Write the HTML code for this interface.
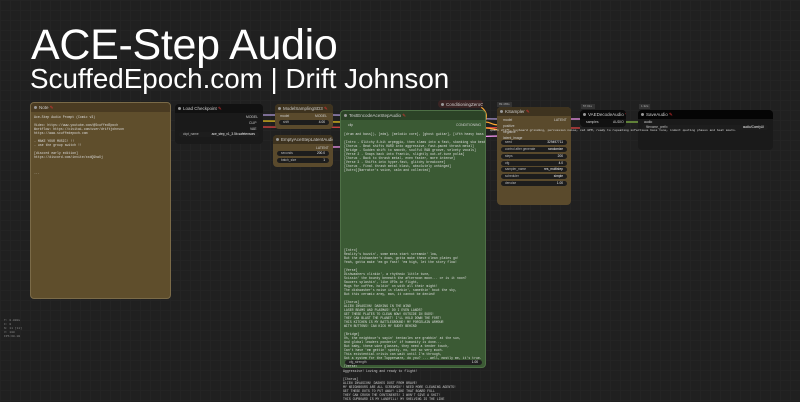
<!DOCTYPE html>
<html style="width:800px;height:402px;overflow:hidden"><head><meta charset="utf-8"><style>
*{margin:0;padding:0;box-sizing:border-box}
body{width:800px;height:402px;overflow:hidden;background:#202020;position:relative;font-family:"Liberation Sans",sans-serif;
background-image:linear-gradient(#242424 1px,transparent 1px),linear-gradient(90deg,#242424 1px,transparent 1px);background-size:10px 10px}
.n{position:absolute;border-radius:4px;overflow:hidden}
.h{height:9px;font-size:4.5px;color:#ccc;padding:2px 0 0 8px;position:relative;white-space:nowrap}
.h:before{content:"";position:absolute;left:3px;top:3px;width:3px;height:3px;border-radius:50%;background:#999}
.t{font-family:"Liberation Mono",monospace;font-size:3.2px;line-height:4px;color:#ddd;white-space:pre;padding:3px}
.w{position:absolute;height:5px;border-radius:3px;background:#1d1d1d;font-size:3.2px;color:#bbb;line-height:5px;padding:0 4px;white-space:nowrap}
.w b{float:right;font-weight:normal;color:#eee}
.lbl{position:absolute;font-size:3.4px;color:#ccc;white-space:nowrap}
</style></head><body>
<div style="position:absolute;left:31px;top:21px;font-size:43px;color:#fff;letter-spacing:-0.3px">ACE-Step Audio</div>
<div style="position:absolute;left:30px;top:63px;font-size:27.8px;color:#fff">ScuffedEpoch.com | Drift Johnson</div>

<svg style="position:absolute;left:0;top:0" width="800" height="402">
<path d="M258 115 H280" stroke="#b39ddb" stroke-width="1.2" fill="none"/>
<path d="M258 121 C300 121 310 122 345 122" stroke="#e5c01c" stroke-width="1.2" fill="none"/>
<path d="M258 127 C400 127 450 128 580 128" stroke="#e04444" stroke-width="1.2" fill="none"/>
<path d="M333 115 C400 115 440 119 500 119" stroke="#b39ddb" stroke-width="1.2" fill="none"/>
<path d="M333 147 C420 147 450 136 500 136" stroke="#ff9cf9" stroke-width="1.2" fill="none"/>
<path d="M485 122 C492 122 490 125 500 125 M485 122 C490 110 480 105 470 103 M485 128 C492 128 495 130 500 130" stroke="#ffa931" stroke-width="1.2" fill="none"/>
<path d="M570 119 H585" stroke="#ff9cf9" stroke-width="1.2" fill="none"/>
<path d="M625 122 H641" stroke="#8bc34a" stroke-width="1.2" fill="none"/>
</svg>

<div class="n" style="left:30px;top:102px;width:141px;height:197px;background:#5f4e2c;border:1px solid #7a6a48">
<div class="h" style="background:#4a3b22">Note <span style="color:#e33">✎</span></div>
<div class="t">Ace-Step Audio Prompt (Comic v3)

Video: https://www.youtube.com/@ScuffedEpoch
Workflow: https://civitai.com/user/driftjohnson
https://www.scuffedepoch.com

- MAKE YOUR MUSIC! !!
- use the group switch !!

[discord early edition]
https://discord.com/invite/xxdQ9hwXj



...</div></div>

<div class="n" style="left:175px;top:104px;width:88px;height:40px;background:#1a1a1a">
<div class="h" style="background:#111">Load Checkpoint <span style="color:#e33">✎</span></div>
<div class="lbl" style="left:71px;top:11px">MODEL</div><div class="lbl" style="left:74px;top:17px">CLIP</div><div class="lbl" style="left:75px;top:23px">VAE</div>
<div class="w" style="left:4px;top:28px;width:80px">ckpt_name<b>ace_step_v1_3.5b.safetensors</b></div></div>

<div class="n" style="left:275px;top:104px;width:58px;height:25px;background:#5a4a2c">
<div class="h" style="background:#3e331f">ModelSamplingSD3 <span style="color:#e33">✎</span></div>
<div class="lbl" style="left:5px;top:10px">model</div><div class="lbl" style="left:40px;top:10px">MODEL</div>
<div class="w" style="left:4px;top:16px;width:50px">shift<b>4.00</b></div></div>

<div class="n" style="left:273px;top:135px;width:60px;height:32px;background:#5a4a2c">
<div class="h" style="background:#3e331f">EmptyAceStepLatentAudio <span style="color:#e33">✎</span></div>
<div class="lbl" style="left:43px;top:11px">LATENT</div>
<div class="w" style="left:4px;top:16px;width:52px">seconds<b>200.0</b></div>
<div class="w" style="left:4px;top:23px;width:52px">batch_size<b>1</b></div></div>

<div class="n" style="left:438px;top:100px;width:45px;height:8px;background:#3a2424"><div class="h" style="background:#3a2424;height:8px">ConditioningZeroOut</div></div>

<div class="n" style="left:340px;top:110px;width:146px;height:258px;background:#3b5a34;border:1px solid #4e7046">
<div class="h" style="background:#2c4327">TextEncodeAceStepAudio <span style="color:#e33">✎</span></div>
<div class="lbl" style="left:7px;top:12px">clip</div><div class="lbl" style="left:115px;top:12px">CONDITIONING</div>
<div class="t" style="margin-top:9px">[drum and bass]), [edm], [melodic core], [ghost guitar], [ifth heavy bass drums]

[Intro - Glitchy 8-bit arpeggio, then slams into a fast, skanking ska beat]
[Chorus - Beat shifts HARD into aggressive, fast-paced thrash metal]
[Bridge - Sudden shift to smooth, soulful R&B groove, velvety vocals]
[Verse 2 - Snaps back into frantic, slightly out-of-tune polka]
[Chorus - Back to thrash metal, even faster, more intense]
[Verse 3 - Shifts into hyper-fast, glitchy breakcore]
[Chorus - Final thrash metal blast, absolutely unhinged]
[Outro][Narrator's voice, calm and collected]



















[Intro]
Reality's buzzin', some mess start screamin' low,
But the dishwasher's down, gotta make these clean plates go!
Yeah, gotta make 'em go fast! 'em high, let the story flow!

[Verse]
Dishwashers clinkin', a rhythmic little tune,
Scissin' the bounty beneath the afternoon moon... or is it noon?
Saucers splashin', like UFOs in flight,
Mugs for coffee, holdin' on with all their might!
The dishwasher's noise is clankin', somethin' bout the sky,
But this ceramic army, man, it cannot be denied!

[Chorus]
ALIEN INVASION! DASHING IN THE WIND
LASER BEAMS AND PLASMAS! DO I EVEN LANDS?
GET THESE PLATES TO CLEAN NOW! OUTSIDE IN SUDS!
THEY CAN BLAST THE PLANET! I'LL HOLD DOWN THE FORT!
THIS KITCHEN IS MY BATTLEGROUND! MY PORCELAIN ARMOUR
WITH BUTTONS! CAN KICK MY SUDSY BEHIND

[Bridge]
Oh, the neighbour's sayin' tentacles are grabbin' at the sun,
And global leaders ponderin' if humanity is done...
But baby, these wine glasses, they need a tender touch,
Can't have 'em gettin' spotty, no, not so very much.
This existential crisis can wait until I'm through,
Got a system for the Tupperware, do you? ... well, mostly me, it's true.

[Verse]
The bowls go here, the platters go right there!
Little green men stompin', shoutin' and their evil glare!
Heard they're callin' missiles, fryin' cities into goo,
But this scrub brush's disinfected! What's a poor woman to do?</div>
<div class="w" style="left:4px;top:249px;width:137px;background:#202020">cfg_strength<b>1.00</b></div></div>

<div class="t" style="position:absolute;left:340px;top:366px;color:#ccc;height:36px;overflow:hidden">Aggressive! Loving and ready to flight!

[Chorus]
ALIEN INVASION! DASHES DUST FROM BRAVE!
MY NEIGHBOURS ARE ALL SCREAMIN'! NEED MORE CLEANING AGENTS!
GET THESE DUTS TO PUT AWAY! LIKE THAT BOARD FULL
THEY CAN CRUSH THE CONTINENTS! I WON'T GIVE A SHIT!
THIS CUPBOARD IS MY LANDFILL! MY SHELVING IS THE LINE</div>

<div style="position:absolute;left:497px;top:102px;width:15px;height:5px;background:#333;font-size:3px;color:#aaa;line-height:5px;padding-left:2px">89.465s</div>
<div class="n" style="left:497px;top:107px;width:74px;height:98px;background:#5a4a2c">
<div class="h" style="background:#3e331f">KSampler <span style="color:#e33">✎</span></div>
<div class="lbl" style="left:6px;top:11px">model</div><div class="lbl" style="left:57px;top:11px">LATENT</div>
<div class="lbl" style="left:6px;top:17px">positive</div><div class="lbl" style="left:6px;top:23px">negative</div><div class="lbl" style="left:6px;top:29px">latent_image</div>
<div class="w" style="left:4px;top:33px;width:66px">seed<b>329497711</b></div>
<div class="w" style="left:4px;top:40px;width:66px">control after generate<b>randomize</b></div>
<div class="w" style="left:4px;top:47px;width:66px">steps<b>200</b></div>
<div class="w" style="left:4px;top:54px;width:66px">cfg<b>4.0</b></div>
<div class="w" style="left:4px;top:60px;width:66px">sampler_name<b>res_multistep</b></div>
<div class="w" style="left:4px;top:67px;width:66px">scheduler<b>simple</b></div>
<div class="w" style="left:4px;top:74px;width:66px">denoise<b>1.00</b></div></div>

<div style="position:absolute;left:581px;top:104px;width:14px;height:5px;background:#333;font-size:3px;color:#aaa;line-height:5px;padding-left:2px">57.01s</div>
<div class="n" style="left:580px;top:110px;width:46px;height:17px;background:#111">
<div class="h" style="background:#0a0a0a">VAEDecodeAudio <span style="color:#e33">✎</span></div>
<div class="lbl" style="left:6px;top:10px">samples</div><div class="lbl" style="left:33px;top:10px">AUDIO</div></div>

<div style="position:absolute;left:639px;top:104px;width:11px;height:5px;background:#333;font-size:3px;color:#aaa;line-height:5px;padding-left:2px">1.32s</div>
<div class="n" style="left:638px;top:110px;width:135px;height:40px;background:#1a1a1a">
<div class="h" style="background:#050505">SaveAudio <span style="color:#e33">✎</span></div>
<div class="lbl" style="left:6px;top:10px">audio</div>
<div class="w" style="left:4px;top:15px;width:126px">filename_prefix<b>audio/ComfyUI</b></div></div>

<div class="t" style="position:absolute;left:487px;top:126px;color:#ddd;font-size:3px">quirk drift, keyboard grinding, percussion noise, cat 8PM, ready to repeating infectious bass tone, indent quoting phases and beat mouts.</div>

<div class="t" style="position:absolute;left:1px;top:316px;color:#888;font-size:3px">T: 0.000s
I: 0
N: 11 [11]
V: 100
FPS:60.00</div>
</body></html>
